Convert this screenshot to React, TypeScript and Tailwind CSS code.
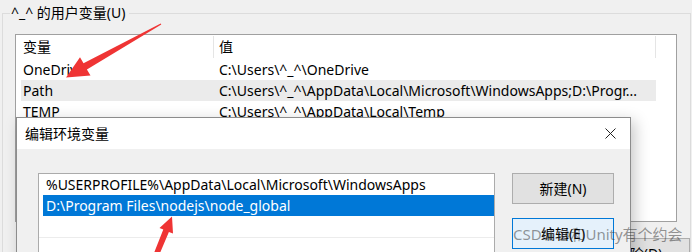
import React from 'react';

const font = { fontFamily: '"Noto Sans", "Noto Sans CJK SC", sans-serif' };

const rows = [
  { name: 'OneDrive', value: 'C:\\Users\\^_^\\OneDrive', active: false },
  { name: 'Path', value: 'C:\\Users\\^_^\\AppData\\Local\\Microsoft\\WindowsApps;D:\\Progr...', active: true },
  { name: 'TEMP', value: 'C:\\Users\\^_^\\AppData\\Local\\Temp', active: false },
  { name: 'TMP', value: 'C:\\Users\\^_^\\AppData\\Local\\Temp', active: false },
];

const WinButton: React.FC<{ label: string; focused?: boolean }> = ({ label, focused }) => (
  <button
    className={`h-[31px] w-[102px] shrink-0 border text-[14px] text-black ${
      focused ? 'border-[#0078d7] bg-[#e5f1fb]' : 'border-[#adadad] bg-[#e1e1e1]'
    }`}
  >
    {label}
  </button>
);

export default function App() {
  return (
    <div
      className="relative h-[252px] w-[692px] overflow-hidden bg-[#f0f0f0] text-[14px] leading-[20px] text-black"
      style={font}
    >
      {/* User variables group */}
      <fieldset className="ml-[2px] mt-[3px] w-[689px] border border-[#dcdcdc] pl-[12px] pb-[20px]">
        <legend className="-ml-[5px] pl-[1px] pr-[3px]">^_^ 的用户变量(U)</legend>

        <div className="mt-[11px] h-[188px] w-[662px] overflow-hidden border border-[#a0a0a0] bg-white">
          {/* header */}
          <div className="flex h-[24px] items-center">
            <div className="flex h-[22px] w-[198px] items-center border-r border-[#e5e5e5] pl-[7px]">变量</div>
            <div className="flex h-[22px] w-[442px] items-center border-r border-[#e5e5e5] pl-[5px]">值</div>
          </div>
          {rows.map((r) => (
            <div
              key={r.name}
              className={`ml-[5px] flex h-[21px] w-[635px] items-center whitespace-nowrap ${
                r.active ? 'bg-[#ebebeb]' : ''
              }`}
            >
              <div className="w-[192px] overflow-hidden pl-[2px]">{r.name}</div>
              <div className="flex-1 overflow-hidden pl-[6px]">{r.value}</div>
            </div>
          ))}
        </div>

        <div className="mt-[16px] flex justify-end gap-[10px] pr-[0px]">
          <WinButton label="新建(N)..." />
          <WinButton label="编辑(E)..." />
          <WinButton label="删除(D)" />
        </div>
      </fieldset>

      {/* Edit environment variable dialog */}
      <div className="absolute left-[16px] top-[117px] h-[200px] w-[615px] border border-[#8c8c8c] bg-[#f0f0f0] shadow-[4px_4px_14px_rgba(0,0,0,0.22)]">
        <div className="flex h-[31px] items-center justify-between bg-white pl-[8px] pr-[14px]">
          <span>编辑环境变量</span>
          <svg width="11" height="11" viewBox="0 0 11 11" className="mt-[-1px]">
            <path d="M0.5 0.5 L10.5 10.5 M10.5 0.5 L0.5 10.5" stroke="#222" strokeWidth="1" />
          </svg>
        </div>

        <div className="flex gap-[17px] pl-[21px] pt-[24px]">
          <div className="h-[120px] w-[457px] border border-[#ababab] bg-white">
            <div className="flex h-[21px] items-center whitespace-nowrap pl-[7px]">
              %USERPROFILE%\AppData\Local\Microsoft\WindowsApps
            </div>
            <div className="ml-[4px] flex h-[21px] items-center whitespace-nowrap bg-[#0078d7] pl-[3px] text-white">
              D:\Program Files\nodejs\node_global
            </div>
            <div className="h-[22px] border-b border-[#ececec]" />
          </div>
          <div className="flex flex-col gap-[14px]">
            <WinButton label="新建(N)" />
            <WinButton label="编辑(E)" focused />
          </div>
        </div>
      </div>

      {/* annotation arrows */}
      <svg className="pointer-events-none absolute left-0 top-0" width="692" height="252">
        <polygon
          points="161.3,24.6 86.9,69.4 90.5,75.5 66,77.5 80,57.2 83.5,63.2 160.7,23.4"
          fill="#ef3434"
        />
        <polygon
          points="172,216.5 173,233.6 168.9,232 160,253 154,253 163.3,229.6 159.5,228"
          fill="#ef3434"
        />
      </svg>

      {/* watermark */}
      <div className="pointer-events-none absolute left-[513px] top-[224px] whitespace-nowrap text-[15px] text-[rgba(50,50,50,0.5)]">
        CSDN @和Unity有个约会
      </div>
    </div>
  );
}
